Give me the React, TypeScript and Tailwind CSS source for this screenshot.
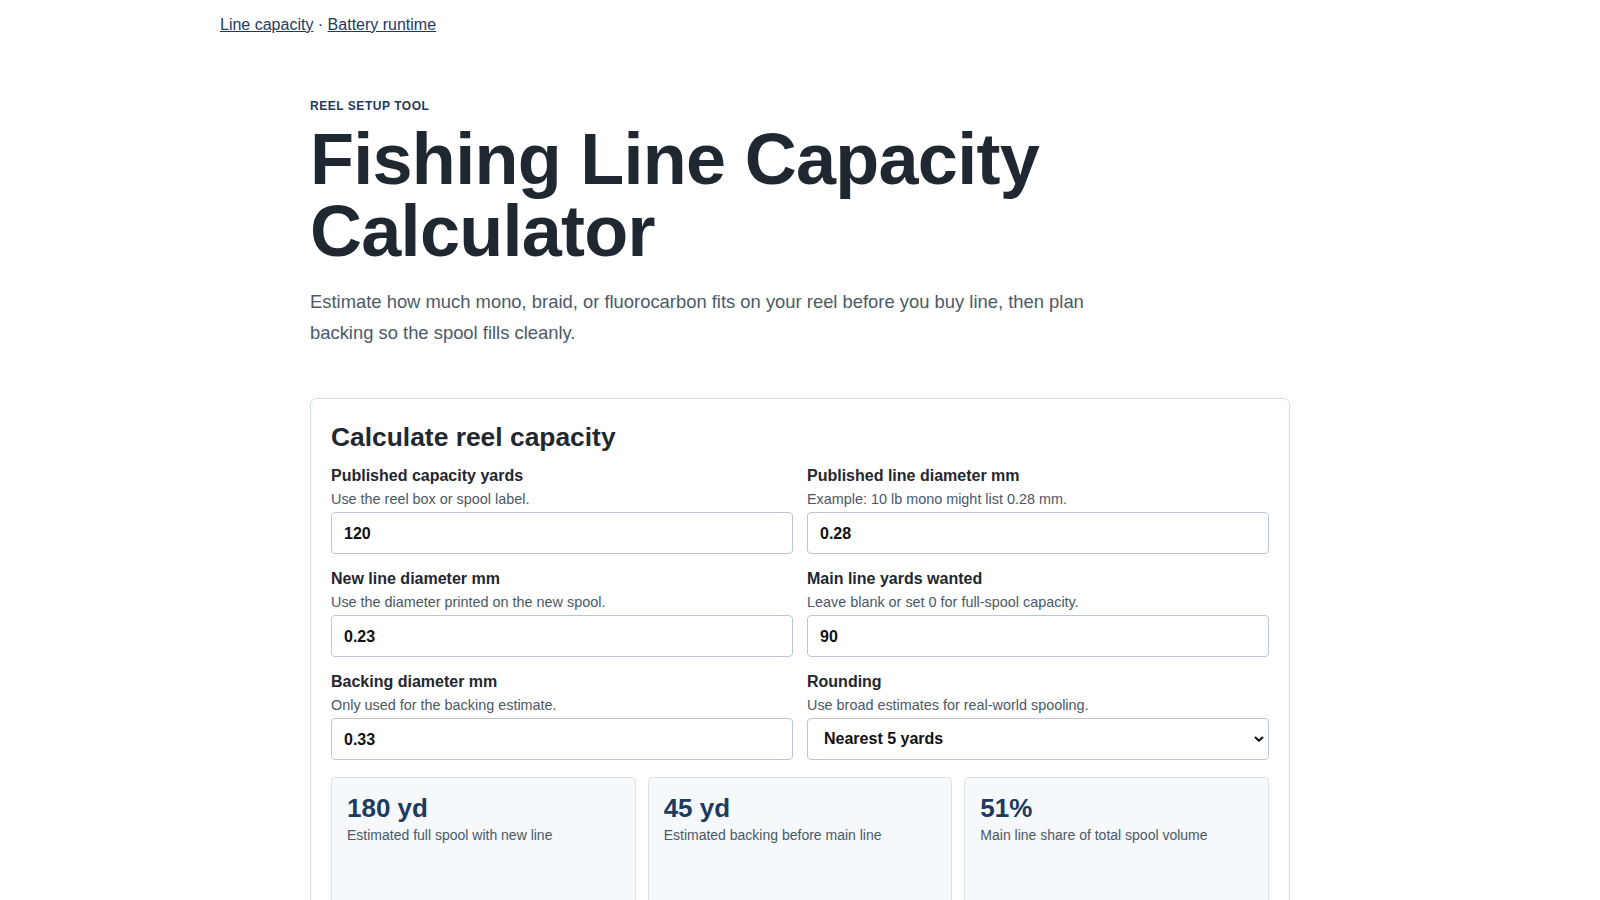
import { useState } from "react";

const fields = [
  {
    label: "Published capacity yards",
    help: "Use the reel box or spool label.",
    value: "120",
  },
  {
    label: "Published line diameter mm",
    help: "Example: 10 lb mono might list 0.28 mm.",
    value: "0.28",
  },
  {
    label: "New line diameter mm",
    help: "Use the diameter printed on the new spool.",
    value: "0.23",
  },
  {
    label: "Main line yards wanted",
    help: "Leave blank or set 0 for full-spool capacity.",
    value: "90",
  },
  {
    label: "Backing diameter mm",
    help: "Only used for the backing estimate.",
    value: "0.33",
  },
];

const results = [
  { value: "180 yd", label: "Estimated full spool with new line" },
  { value: "45 yd", label: "Estimated backing before main line" },
  { value: "51%", label: "Main line share of total spool volume" },
];

function Field({ label, help, value }: { label: string; help: string; value: string }) {
  const [v, setV] = useState(value);
  return (
    <label className="block">
      <span className="block text-[16px] leading-[22px] font-bold text-[#1f2730]">{label}</span>
      <span className="mt-[2px] block text-[14.4px] leading-[20px] text-[#4a5866]">{help}</span>
      <input
        value={v}
        onChange={(e) => setV(e.target.value)}
        className="mt-[3px] block h-[42px] w-full rounded-[4px] border border-[#b9c7d4] bg-white px-3 pt-[1px] text-[16px] font-bold text-[#111]"
      />
    </label>
  );
}

export default function App() {
  return (
    <div className="min-h-screen bg-white font-['Liberation_Sans',Arial,sans-serif] text-[#1f2730]">
      {/* top links */}
      <nav className="mx-auto max-w-[1160px] pt-[13px] text-[16px] leading-6 text-[#1e3a5f]">
        <a href="#" className="underline">Line capacity</a>
        <span> · </span>
        <a href="#" className="underline">Battery runtime</a>
      </nav>

      <main className="mx-auto max-w-[980px] pt-[61px] pb-10">
        <p className="text-[12px] leading-4 font-bold uppercase tracking-[0.045em] text-[#1e3a5f]">
          Reel setup tool
        </p>
        <h1 className="mt-[9px] text-[72px] leading-[72px] font-bold tracking-[-0.01em] text-[#1f2730]">
          Fishing Line Capacity
          <br />
          Calculator
        </h1>
        <p className="mt-[20px] max-w-[790px] text-[18.4px] leading-[30.6px] text-[#4b5a69]">
          Estimate how much mono, braid, or fluorocarbon fits on your reel before you buy line, then plan
          backing so the spool fills cleanly.
        </p>

        <section className="mt-[50px] rounded-[6px] border border-[#d6e0e8] p-5">
          <h2 className="text-[26.4px] leading-9 font-bold text-[#1f2730]">Calculate reel capacity</h2>
          <div className="mt-[10px] grid grid-cols-2 gap-[14px]">
            {fields.map((f) => (
              <Field key={f.label} {...f} />
            ))}
            <label className="block">
              <span className="block text-[16px] leading-[22px] font-bold text-[#1f2730]">Rounding</span>
              <span className="mt-[2px] block text-[14.4px] leading-[20px] text-[#4a5866]">
                Use broad estimates for real-world spooling.
              </span>
              <div className="relative mt-[3px]">
                <select
                  defaultValue="5"
                  className="block h-[42px] w-full appearance-none rounded-[4px] border border-[#b9c7d4] bg-white px-4 text-[16px] font-bold text-[#111]"
                >
                  <option value="1">Nearest yard</option>
                  <option value="5">Nearest 5 yards</option>
                  <option value="10">Nearest 10 yards</option>
                </select>
                <svg
                  className="pointer-events-none absolute right-[5px] top-1/2 h-[10px] w-[10px] -translate-y-1/2"
                  viewBox="0 0 10 10"
                  fill="none"
                  stroke="#111"
                  strokeWidth="2"
                  strokeLinecap="round"
                  strokeLinejoin="round"
                >
                  <path d="M1.5 3.5 5 6.8 8.5 3.5" />
                </svg>
              </div>
            </label>
          </div>

          <div className="mt-[17px] grid grid-cols-3 gap-3">
            {results.map((r) => (
              <div key={r.label} className="h-[160px] rounded-[4px] border border-[#d9e2ea] bg-[#f6f9fb] px-[15px] py-4">
                <div className="text-[26px] leading-7 font-bold text-[#1d3a5f]">{r.value}</div>
                <div className="mt-[3px] text-[14px] leading-5 text-[#4a5866]">{r.label}</div>
              </div>
            ))}
          </div>
        </section>
      </main>
    </div>
  );
}
